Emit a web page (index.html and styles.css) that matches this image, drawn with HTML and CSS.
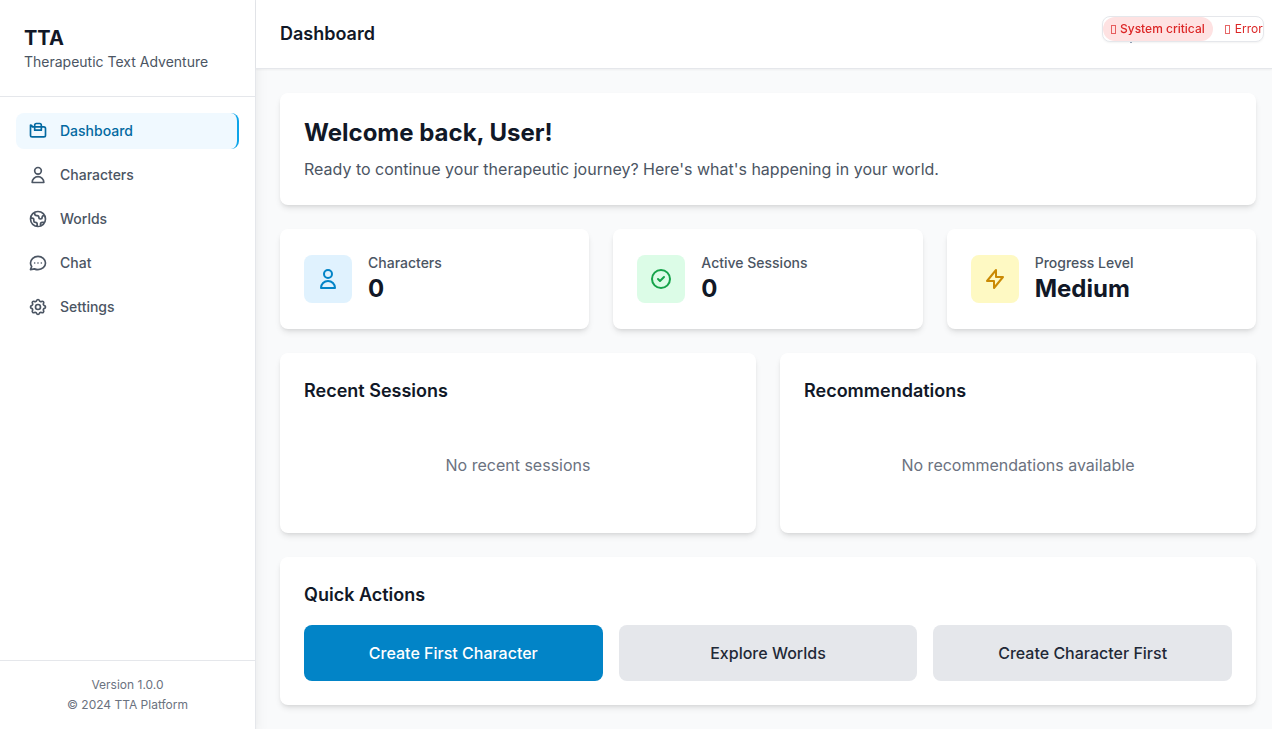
FILE: index.html
```html
<!DOCTYPE html>
<html lang="en">
<head>
<meta charset="utf-8">
<title>TTA - Therapeutic Text Adventure</title>
<link rel="stylesheet" href="styles.css">
</head>
<body>
<div class="app">
  <aside class="sidebar">
    <div class="brand">
      <div class="brand-name">TTA</div>
      <div class="brand-sub">Therapeutic Text Adventure</div>
    </div>
    <nav class="nav">
      <a class="nav-item active"><svg class="icon" viewBox="0 0 24 24"><path d="M3 7v10a2 2 0 002 2h14a2 2 0 002-2V9a2 2 0 00-2-2H5a2 2 0 00-2-2z"/><path d="M8 5a2 2 0 012-2h4a2 2 0 012 2v6H8V5z"/></svg><span>Dashboard</span></a>
      <a class="nav-item"><svg class="icon" viewBox="0 0 24 24"><path d="M16 7a4 4 0 11-8 0 4 4 0 018 0zM12 14a7 7 0 00-7 7h14a7 7 0 00-7-7z"/></svg><span>Characters</span></a>
      <a class="nav-item"><svg class="icon" viewBox="0 0 24 24"><path d="M3.055 11H5a2 2 0 012 2v1a2 2 0 002 2 2 2 0 012 2v2.945M8 3.935V5.5A2.5 2.5 0 0010.5 8h.5a2 2 0 012 2 2 2 0 104 0 2 2 0 012-2h1.064M15 20.488V18a2 2 0 012-2h3.064M21 12a9 9 0 11-18 0 9 9 0 0118 0z"/></svg><span>Worlds</span></a>
      <a class="nav-item"><svg class="icon" viewBox="0 0 24 24"><path d="M8 12h.01M12 12h.01M16 12h.01M21 12c0 4.418-4.03 8-9 8a9.863 9.863 0 01-4.255-.949L3 20l1.395-3.72C3.512 15.042 3 13.574 3 12c0-4.418 4.03-8 9-8s9 3.582 9 8z"/></svg><span>Chat</span></a>
      <a class="nav-item"><svg class="icon" viewBox="0 0 24 24"><path d="M10.325 4.317c.426-1.756 2.924-1.756 3.35 0a1.724 1.724 0 002.573 1.066c1.543-.94 3.31.826 2.37 2.37a1.724 1.724 0 001.065 2.572c1.756.426 1.756 2.924 0 3.35a1.724 1.724 0 00-1.066 2.573c.94 1.543-.826 3.31-2.37 2.37a1.724 1.724 0 00-2.572 1.065c-.426 1.756-2.924 1.756-3.35 0a1.724 1.724 0 00-2.573-1.066c-1.543.94-3.31-.826-2.37-2.37a1.724 1.724 0 00-1.065-2.572c-1.756-.426-1.756-2.924 0-3.35a1.724 1.724 0 001.066-2.573c-.94-1.543.826-3.31 2.37-2.37.996.608 2.296.07 2.572-1.065z"/><path d="M15 12a3 3 0 11-6 0 3 3 0 016 0z"/></svg><span>Settings</span></a>
    </nav>
    <footer class="side-footer"><p>Version 1.0.0</p><p>© 2024 TTA Platform</p></footer>
  </aside>
  <div class="page">
    <header class="topbar"><h2>Dashboard</h2></header>
    <main class="content">
      <section class="card">
        <h1>Welcome back, User!</h1>
        <p class="lead">Ready to continue your therapeutic journey? Here's what's happening in your world.</p>
      </section>
      <div class="stats">
        <div class="card stat">
          <div class="badge blue"><svg class="stat-icon" viewBox="0 0 24 24"><path d="M16 7a4 4 0 11-8 0 4 4 0 018 0zM12 14a7 7 0 00-7 7h14a7 7 0 00-7-7z"/></svg></div>
          <div><p class="label">Characters</p><p class="value">0</p></div>
        </div>
        <div class="card stat">
          <div class="badge green"><svg class="stat-icon" viewBox="0 0 24 24"><path d="M9 12l2 2 4-4m6 2a9 9 0 11-18 0 9 9 0 0118 0z"/></svg></div>
          <div><p class="label">Active Sessions</p><p class="value">0</p></div>
        </div>
        <div class="card stat">
          <div class="badge yellow"><svg class="stat-icon" viewBox="0 0 24 24"><path d="M13 10V3L4 14h7v7l9-11h-7z"/></svg></div>
          <div><p class="label">Progress Level</p><p class="value">Medium</p></div>
        </div>
      </div>
      <div class="panels">
        <section class="card"><h3>Recent Sessions</h3><p class="empty">No recent sessions</p></section>
        <section class="card"><h3>Recommendations</h3><p class="empty">No recommendations available</p></section>
      </div>
      <section class="card">
        <h3>Quick Actions</h3>
        <div class="actions">
          <button class="btn primary">Create First Character</button>
          <button class="btn">Explore Worlds</button>
          <button class="btn">Create Character First</button>
        </div>
      </section>
    </main>
  </div>
</div>
<div class="mark"></div>
<div class="status">
  <span class="pill critical"><span class="glyph"></span><span>System critical</span></span>
  <span class="pill error"><span class="glyph"></span><span>Error</span></span>
</div>
</body>
</html>
```
FILE: styles.css
```css
* { box-sizing: border-box; }
body, h1, h2, h3, p { margin: 0; }
body { font-family: Inter, "Liberation Sans", sans-serif; font-size: 16px; line-height: 24px; color: #111827; background: #f9fafb; overflow: hidden; }
.app { display: flex; height: 100vh; }
.sidebar { width: 256px; flex: none; display: flex; flex-direction: column; background: #fff; border-right: 1px solid #e5e7eb; box-shadow: 0 10px 15px -3px rgba(0,0,0,.1), 0 4px 6px -4px rgba(0,0,0,.1); }
.brand { height: 97px; padding: 24px; border-bottom: 1px solid #e5e7eb; }
.brand-name { font-size: 20px; line-height: 28px; font-weight: 700; }
.brand-sub { font-size: 14px; line-height: 20px; color: #4b5563; }
.nav { flex: 1; display: flex; flex-direction: column; gap: 8px; padding: 16px; }
.nav-item { display: flex; align-items: center; gap: 12px; height: 36px; padding: 0 12px; border-radius: 8px; font-size: 14px; line-height: 20px; font-weight: 500; color: #4b5563; }
.nav-item.active { background: #f0f9ff; color: #0369a1; border-right: 2px solid #0ea5e9; }
.icon, .stat-icon { fill: none; stroke: currentColor; stroke-width: 2; stroke-linecap: round; stroke-linejoin: round; flex: none; }
.icon { width: 20px; height: 20px; }
.stat-icon { width: 24px; height: 24px; }
.side-footer { padding: 16px; height: 69px; border-top: 1px solid #e5e7eb; font-size: 12px; line-height: 16px; text-align: center; color: #6b7280; }
.side-footer p + p { margin-top: 4px; }
.page { flex: 1; min-width: 0; display: flex; flex-direction: column; }
.topbar { height: 69px; flex: none; padding: 20px 24px; background: #fff; border-bottom: 1px solid #e5e7eb; box-shadow: 0 1px 2px rgba(0,0,0,.05); }
h2, h3 { font-size: 18px; line-height: 28px; font-weight: 600; }
.content { display: flex; flex-direction: column; gap: 24px; padding: 24px 16px 24px 24px; }
.card { padding: 24px; background: #fff; border-radius: 8px; box-shadow: 0 4px 6px -1px rgba(0,0,0,.1), 0 2px 4px -2px rgba(0,0,0,.1); }
h1 { font-size: 24px; line-height: 32px; font-weight: 700; margin-bottom: 8px; }
.lead { color: #4b5563; }
.stats { display: grid; grid-template-columns: repeat(3, 1fr); gap: 24px; }
.stat { display: flex; align-items: center; gap: 16px; }
.badge { display: flex; align-items: center; justify-content: center; width: 48px; height: 48px; border-radius: 8px; }
.blue { background: #e0f2fe; color: #0284c7; }
.green { background: #dcfce7; color: #16a34a; }
.yellow { background: #fef9c3; color: #ca8a04; }
.label { font-size: 14px; line-height: 20px; font-weight: 500; color: #4b5563; }
.value { font-size: 24px; line-height: 32px; font-weight: 700; }
.panels { display: grid; grid-template-columns: 1fr 1fr; gap: 24px; }
h3 { margin-bottom: 16px; }
.empty { padding: 32px 0; text-align: center; color: #6b7280; }
.actions { display: grid; grid-template-columns: repeat(3, 1fr); gap: 16px; }
.btn { height: 56px; border: 0; border-radius: 8px; background: #e5e7eb; color: #1f2937; font: 500 16px/24px Inter, "Liberation Sans", sans-serif; }
.btn.primary { background: #0284c7; color: #fff; }
.status { position: fixed; top: 16px; right: 8px; width: 162px; height: 26px; display: flex; gap: 4px; overflow: hidden; background: #fff; border: 1px solid #e5e7eb; border-radius: 8px; box-shadow: 0 1px 2px rgba(0,0,0,.05); font-size: 12px; line-height: 16px; font-weight: 500; color: #dc2626; }
.pill { display: flex; align-items: center; gap: 4px; flex: none; padding: 4px 8px; border-radius: 12px; }
.critical { background: #fee2e2; }
.error { font-weight: 400; gap: 5px; }
/* Placeholder box shown ahead of each status label */
.glyph { width: 5px; height: 9px; border: 1px solid #dc2626; opacity: .7; }
.mark { position: fixed; left: 1130px; top: 42px; width: 2px; height: 1px; background: #94a3b8; }
```
